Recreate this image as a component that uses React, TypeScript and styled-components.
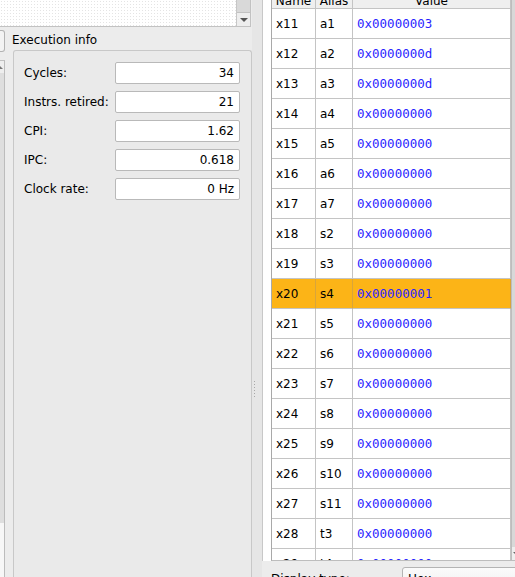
import React from 'react';
import styled, { createGlobalStyle } from 'styled-components';

const GlobalStyle = createGlobalStyle`
  html, body { margin: 0; padding: 0; background: #ececec; overflow: hidden; }
  body {
    font-family: "DejaVu Sans", "Liberation Sans", sans-serif;
    font-size: 12px;
    color: #000;
  }
  #root { width: 515px; height: 577px; }
`;

const Window = styled.div`
  display: flex;
  width: 515px;
  height: 577px;
  overflow: hidden;
  background: #ececec;
`;

/* ---------- left pane ---------- */
const LeftPane = styled.div`
  width: 252px;
  flex: none;
  display: flex;
  flex-direction: column;
`;

const TopList = styled.div`
  width: 251px;
  height: 27px;
  flex: none;
  box-sizing: border-box;
  display: flex;
  justify-content: flex-end;
  border-right: 1px solid #c2c2c2;
  border-bottom: 1px solid #c2c2c2;
  background-color: #fff;
  background-image: radial-gradient(circle, #e4e4e4 0.6px, transparent 0.8px);
  background-size: 3px 3px;
`;

const ListScroll = styled.div`
  width: 13px;
  display: flex;
  flex-direction: column;
  border-left: 1px solid #c6c6c6;
`;

const ListTrack = styled.div`
  flex: 1;
  background: #d9d9d9;
  border-bottom: 1px solid #c2c2c2;
`;

const ScrollButton = styled.div<{ $h: number }>`
  height: ${(p) => p.$h}px;
  flex: none;
  background: #eeeeee;
  display: flex;
  align-items: center;
  justify-content: center;
`;

const DownArrow = styled.div`
  width: 0;
  height: 0;
  border-left: 4px solid transparent;
  border-right: 4px solid transparent;
  border-top: 4px solid #555;
`;

const LowerRow = styled.div`
  flex: 1;
  display: flex;
  min-height: 0;
`;

const StubColumn = styled.div`
  width: 5px;
  flex: none;
  display: flex;
  flex-direction: column;
`;

const StubButton = styled.div`
  margin-top: 3px;
  height: 22px;
  box-sizing: border-box;
  border: 1px solid #b3b3b3;
  border-left: none;
  border-radius: 0 3px 3px 0;
  background: #f3f3f3;
`;

const StubStrip = styled.div`
  margin-top: 8px;
  height: 463px;
  box-sizing: border-box;
  display: flex;
  flex-direction: column;
  border-top: 1px solid #c0c0c0;
  border-right: 1px solid #bcbcbc;
  background: #dedede;
`;

const StubArrowBox = styled.div`
  height: 12px;
  background: #eeeeee;
  display: flex;
  align-items: center;
`;

const StubArrow = styled.div`
  width: 0;
  height: 0;
  border-right: 3px solid transparent;
  border-bottom: 3px solid #777;
`;

const StubRest = styled.div`
  flex: 1;
  background: #f7f7f7;
  border-right: 1px solid #bcbcbc;
`;

const InfoColumn = styled.div`
  flex: 1;
  display: flex;
  flex-direction: column;
  padding-left: 8px;
  min-width: 0;
`;

const Title = styled.div`
  margin-left: -1px;
  padding: 5px 0 2px;
  line-height: 16px;
  white-space: nowrap;
`;

const GroupBox = styled.div`
  flex: 1;
  box-sizing: border-box;
  border: 1px solid #c8c8c8;
  border-bottom: none;
  border-radius: 3px 3px 0 0;
  background: #eaeaea;
  padding: 11px 11px 0 10px;
  display: grid;
  grid-template-columns: 91px 1fr;
  grid-auto-rows: 22px;
  row-gap: 7px;
  align-content: start;
`;

const FieldLabel = styled.div`
  display: flex;
  align-items: center;
  white-space: nowrap;
`;

const Field = styled.div`
  box-sizing: border-box;
  height: 22px;
  border: 1px solid #b9b9b9;
  border-radius: 2px;
  background: #fff;
  text-align: right;
  padding: 0 5px;
  line-height: 20px;
`;

/* ---------- splitter ---------- */
const Splitter = styled.div`
  width: 10px;
  flex: none;
  display: flex;
  flex-direction: column;
  padding-top: 381px;
  padding-left: 2px;
  box-sizing: border-box;
  background: #e6e6e6;
`;

const Grip = styled.div`
  display: flex;
  flex-direction: column;
  gap: 2px;
`;

const GripDot = styled.div`
  width: 1px;
  height: 1px;
  background: #a8a8a8;
`;

/* ---------- right pane ---------- */
const RightPane = styled.div`
  flex: 1;
  min-width: 0;
  display: flex;
  flex-direction: column;
`;

const TablePanel = styled.div`
  height: 561px;
  flex: none;
  box-sizing: border-box;
  display: flex;
  border-left: 1px solid #c8c8c8;
  background: #fff;
  padding-left: 8px;
`;

const Table = styled.div`
  flex: none;
  width: 260px;
  display: flex;
  border-left: 1px solid #a9a9a9;
  border-bottom: 1px solid #bdbdbd;
  overflow: hidden;
`;

const TableBody = styled.div`
  width: 239px;
  flex: none;
  display: grid;
  grid-template-columns: 44px 37px 158px;
  grid-auto-rows: max-content;
  align-content: start;
  overflow: hidden;
`;

const HeaderCell = styled.div`
  height: 9px;
  box-sizing: border-box;
  border-right: 1px solid #c4c4c4;
  border-bottom: 1px solid #c4c4c4;
  background: #efefef;
  display: flex;
  align-items: flex-end;
  justify-content: center;
  overflow: hidden;
  padding-bottom: 1px;
`;

const HeaderText = styled.span`
  line-height: 12px;
  white-space: nowrap;
`;

const Cell = styled.div<{ $hl: boolean; $mono?: boolean }>`
  height: 30px;
  box-sizing: border-box;
  border-right: 1px solid ${(p) => (p.$hl ? '#d9a53a' : '#c4c4c4')};
  border-bottom: 1px solid #c4c4c4;
  background: ${(p) => (p.$hl ? '#fcb417' : '#fff')};
  display: flex;
  align-items: center;
  padding-left: 4px;
  white-space: nowrap;
  overflow: hidden;
  color: ${(p) => (p.$mono ? '#2a1fff' : '#000')};
  font-family: ${(p) =>
    p.$mono ? '"DejaVu Sans Mono", "Liberation Mono", monospace' : 'inherit'};
  font-size: ${(p) => (p.$mono ? '12.5px' : '12px')};
`;

const VScroll = styled.div`
  width: 16px;
  flex: none;
  display: flex;
  flex-direction: column;
  border-left: 1px solid #bdbdbd;
`;

const VTrack = styled.div`
  flex: 1;
  background: #d8d8d8;
`;

const SmallMark = styled.div`
  width: 0;
  height: 0;
  border-left: 3px solid transparent;
  border-right: 3px solid transparent;
  border-top: 3px solid #666;
  margin-left: -8px;
`;

const DisplayRow = styled.div`
  display: flex;
  align-items: center;
  height: 24px;
  margin-top: 6px;
  padding-left: 9px;
`;

const DisplayLabel = styled.div`
  width: 131px;
  flex: none;
  white-space: nowrap;
`;

const Combo = styled.div`
  width: 140px;
  height: 24px;
  flex: none;
  box-sizing: border-box;
  border: 1px solid #b4b4b4;
  border-radius: 3px;
  background: linear-gradient(#fbfbfb, #f0f0f0);
  padding-left: 5px;
  line-height: 22px;
`;

type Reg = { name: string; alias: string; value: string };

const regs: Reg[] = [
  { name: 'x11', alias: 'a1', value: '0x00000003' },
  { name: 'x12', alias: 'a2', value: '0x0000000d' },
  { name: 'x13', alias: 'a3', value: '0x0000000d' },
  { name: 'x14', alias: 'a4', value: '0x00000000' },
  { name: 'x15', alias: 'a5', value: '0x00000000' },
  { name: 'x16', alias: 'a6', value: '0x00000000' },
  { name: 'x17', alias: 'a7', value: '0x00000000' },
  { name: 'x18', alias: 's2', value: '0x00000000' },
  { name: 'x19', alias: 's3', value: '0x00000000' },
  { name: 'x20', alias: 's4', value: '0x00000001' },
  { name: 'x21', alias: 's5', value: '0x00000000' },
  { name: 'x22', alias: 's6', value: '0x00000000' },
  { name: 'x23', alias: 's7', value: '0x00000000' },
  { name: 'x24', alias: 's8', value: '0x00000000' },
  { name: 'x25', alias: 's9', value: '0x00000000' },
  { name: 'x26', alias: 's10', value: '0x00000000' },
  { name: 'x27', alias: 's11', value: '0x00000000' },
  { name: 'x28', alias: 't3', value: '0x00000000' },
  { name: 'x29', alias: 't4', value: '0x00000000' },
];

const stats: [string, string][] = [
  ['Cycles:', '34'],
  ['Instrs. retired:', '21'],
  ['CPI:', '1.62'],
  ['IPC:', '0.618'],
  ['Clock rate:', '0 Hz'],
];

export default function App() {
  return (
    <>
      <GlobalStyle />
      <Window>
        <LeftPane>
          <TopList>
            <ListScroll>
              <ListTrack />
              <ScrollButton $h={13}>
                <DownArrow />
              </ScrollButton>
            </ListScroll>
          </TopList>
          <LowerRow>
            <StubColumn>
              <StubButton />
              <StubStrip>
                <StubArrowBox>
                  <StubArrow />
                </StubArrowBox>
              </StubStrip>
              <StubRest />
            </StubColumn>
            <InfoColumn>
              <Title>Execution info</Title>
              <GroupBox>
                {stats.map(([label, value]) => (
                  <React.Fragment key={label}>
                    <FieldLabel>{label}</FieldLabel>
                    <Field>{value}</Field>
                  </React.Fragment>
                ))}
              </GroupBox>
            </InfoColumn>
          </LowerRow>
        </LeftPane>

        <Splitter>
          <Grip>
            {Array.from({ length: 6 }).map((_, i) => (
              <GripDot key={i} />
            ))}
          </Grip>
        </Splitter>

        <RightPane>
          <TablePanel>
            <Table>
              <TableBody>
                <HeaderCell>
                  <HeaderText>Name</HeaderText>
                </HeaderCell>
                <HeaderCell>
                  <HeaderText>Alias</HeaderText>
                </HeaderCell>
                <HeaderCell>
                  <HeaderText>Value</HeaderText>
                </HeaderCell>
                {regs.map((r) => {
                  const hl = r.name === 'x20';
                  return (
                    <React.Fragment key={r.name}>
                      <Cell $hl={hl}>{r.name}</Cell>
                      <Cell $hl={hl}>{r.alias}</Cell>
                      <Cell $hl={hl} $mono>
                        {r.value}
                      </Cell>
                    </React.Fragment>
                  );
                })}
              </TableBody>
              <VScroll>
                <VTrack />
                <ScrollButton $h={13}>
                  <SmallMark />
                </ScrollButton>
              </VScroll>
            </Table>
          </TablePanel>
          <DisplayRow>
            <DisplayLabel>Display type:</DisplayLabel>
            <Combo>Hex</Combo>
          </DisplayRow>
        </RightPane>
      </Window>
    </>
  );
}
